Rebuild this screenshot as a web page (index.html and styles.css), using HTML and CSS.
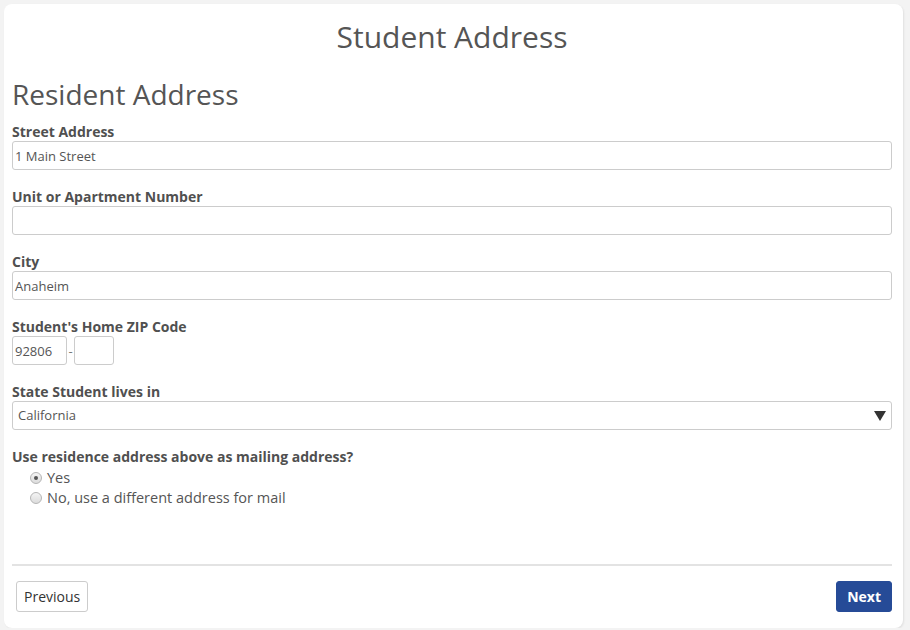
FILE: index.html
```html
<!DOCTYPE html>
<html>
<head>
<meta charset="utf-8">
<link rel="stylesheet" href="styles.css">
</head>
<body>
<div class="card">
  <h1 class="title">Student Address</h1>
  <h2 class="section">Resident Address</h2>
  <div class="field">
    <label class="label">Street Address</label>
    <div class="input">1 Main Street</div>
  </div>
  <div class="field">
    <label class="label">Unit or Apartment Number</label>
    <div class="input"></div>
  </div>
  <div class="field">
    <label class="label">City</label>
    <div class="input">Anaheim</div>
  </div>
  <div class="field">
    <label class="label">Student's Home ZIP Code</label>
    <div class="zip">
      <div class="input zip5">92806</div>
      <span class="dash">-</span>
      <div class="input zip4"></div>
    </div>
  </div>
  <div class="field">
    <label class="label">State Student lives in</label>
    <div class="input select"><span>California</span><span class="arrow"></span></div>
  </div>
  <div class="field">
    <label class="label">Use residence address above as mailing address?</label>
    <div class="radios">
      <div class="radio"><span class="dot checked"></span><span>Yes</span></div>
      <div class="radio"><span class="dot"></span><span>No, use a different address for mail</span></div>
    </div>
  </div>
  <div class="spacer"></div>
  <div class="footer">
    <button class="btn prev">Previous</button>
    <button class="btn next">Next</button>
  </div>
</div>
</body>
</html>
```
FILE: styles.css
```css
html, body {
  margin: 0;
  padding: 0;
  background: #f3f3f3;
  font-family: "Open Sans", "Noto Sans", sans-serif;
  color: #555;
}
.card {
  margin: 4px 0 0 4px;
  width: 899px;
  height: 624px;
  box-sizing: border-box;
  background: #fff;
  border-radius: 8px;
  box-shadow: 1px 1px 2px rgba(0,0,0,0.08);
  padding: 0 11px 0 8px;
  display: flex;
  flex-direction: column;
}
.title {
  margin: 14px 0 0 0;
  font-size: 30px;
  line-height: 38px;
  font-weight: 400;
  text-align: center;
  color: #555;
}
.section {
  margin: 20px 0 0 0;
  font-size: 28px;
  line-height: 36px;
  font-weight: 400;
  color: #555;
}
.field {
  display: flex;
  flex-direction: column;
  margin-top: 10px;
}
.field + .field {
  margin-top: 17px;
}
.label {
  font-size: 14px;
  line-height: 19px;
  font-weight: 700;
  color: #505050;
}
.input {
  height: 29px;
  box-sizing: border-box;
  border: 1px solid #ccc;
  border-radius: 3px;
  font-size: 13px;
  line-height: 29px;
  padding: 0 2px;
  color: #555;
}
.zip {
  display: flex;
  align-items: center;
}
.zip5 { width: 55px; }
.zip4 { width: 40px; }
.dash {
  font-size: 13px;
  width: 7px;
  text-align: center;
  color: #777;
}
.select {
  display: flex;
  justify-content: space-between;
  align-items: center;
  padding: 0 5px 0 5px;
}
.arrow {
  width: 0;
  height: 0;
  border-left: 6px solid transparent;
  border-right: 6px solid transparent;
  border-top: 10px solid #333;
}
.radios {
  display: flex;
  flex-direction: column;
  gap: 1px;
  padding-left: 18px;
  margin-top: 2px;
}
.radio {
  display: flex;
  align-items: center;
  gap: 5px;
  font-size: 14.5px;
  line-height: 19px;
  color: #555;
}
.dot {
  width: 12px;
  height: 12px;
  box-sizing: border-box;
  border-radius: 50%;
  border: 1px solid #b5b5b5;
  background: linear-gradient(#f4f4f4, #dcdcdc);
  position: relative;
}
.dot.checked::after {
  content: "";
  position: absolute;
  left: 3px;
  top: 3px;
  width: 4px;
  height: 4px;
  border-radius: 50%;
  background: #555;
}
.spacer { flex: 1; }
.footer {
  border-top: 2px solid #e3e3e3;
  display: flex;
  justify-content: space-between;
  align-items: flex-start;
  padding: 15px 0 0 4px;
  height: 64px;
  box-sizing: border-box;
}
.btn {
  font-family: "Open Sans", "Noto Sans", sans-serif;
  font-size: 14px;
  height: 31px;
  border-radius: 3px;
  cursor: pointer;
}
.prev {
  background: #fff;
  border: 1px solid #ccc;
  color: #333;
  padding: 0 7px;
}
.next {
  background: #264b97;
  border: 1px solid #264b97;
  color: #fff;
  font-weight: 700;
  padding: 0 10px;
}
```
